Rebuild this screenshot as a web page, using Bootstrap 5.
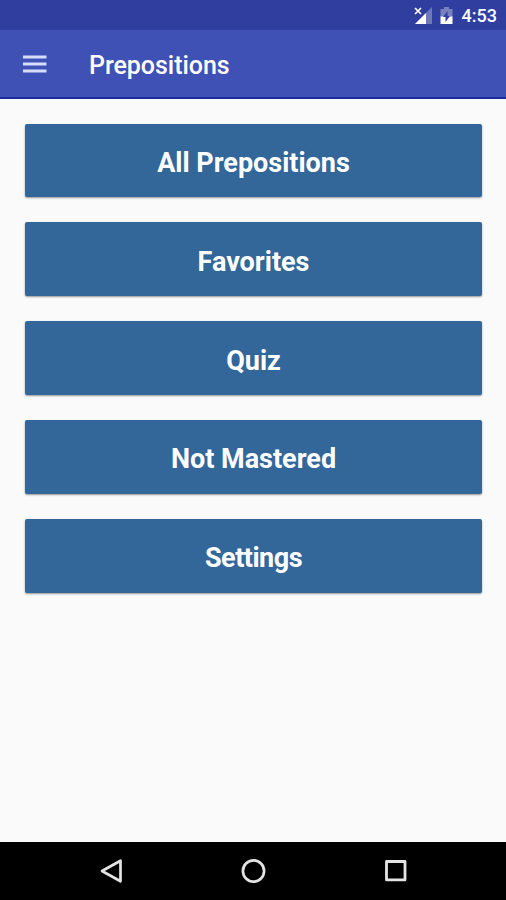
<!DOCTYPE html>
<html lang="en">
<head>
<meta charset="utf-8">
<meta name="viewport" content="width=device-width, initial-scale=1">
<title>Prepositions</title>
<link href="https://cdn.jsdelivr.net/npm/bootstrap@5.3.0/dist/css/bootstrap.min.css" rel="stylesheet">
<style>
body { font-family: Roboto, "Liberation Sans", sans-serif; background: #fafafa; }
.status-bar { height: 30px; background: #303f9f; padding-right: 9px; }
.clock { font-size: 18px; font-weight: 500; line-height: 30px; padding-top: 2px; margin-left: 9px; }
.app-bar { height: 69px; background: #3f51b5; border-bottom: 2px solid #1c2b9c; padding: 1px 22px 0; }
.app-title { font-size: 25px; font-weight: 500; line-height: 30px; margin-left: 42px; padding-top: 3px; letter-spacing: -.04px; }
.menu-list { padding: 24.700px 24px 0 25px; gap: 25.100px; }
.menu-btn, .menu-btn:hover { height: 73.700px; background: #336699; color: #fff; border: 0; border-radius: 2px; font-size: 27px; font-weight: 700; line-height: 32px; padding: 5px 0 0; box-shadow: 0 1px 2px rgba(0,0,0,.4); }
.menu-btn.tight { letter-spacing: -.5px; padding-top: 4px; }
.nav-keys { height: 58px; background: #000; padding: 0 99px; }
</style>
</head>
<body>
<div class="d-flex flex-column vh-100 overflow-hidden">
  <div class="status-bar d-flex align-items-center justify-content-end text-white flex-shrink-0">
    <svg width="19" height="18" viewBox="0 0 19 18" aria-hidden="true"><path d="M19 1v17H2z" fill="#fff" opacity=".3"/><path d="M13 7v11H2z" fill="#fff"/><path d="M2 2l6 6m0-6l-6 6" stroke="#fff" stroke-width="1.700"/></svg>
    <svg class="ms-2" width="13" height="18" viewBox="0 0 13 18" aria-hidden="true"><path d="M4 1h5v2h3.500v8h-12V3H4z" fill="#fff" opacity=".35"/><path d="M.5 10.500h12V18H.5z" fill="#fff"/><path d="M7.500 5v5H10l-4.500 6v-5H3z" fill="#303f9f"/></svg>
    <span class="clock">4:53</span>
  </div>
  <nav class="app-bar d-flex align-items-center text-white flex-shrink-0">
    <svg width="25" height="18" viewBox="0 0 25 18" role="img" aria-label="Menu"><path d="M1 2h23.500M1 9h23.500M1 16h23.500" stroke="#d5defa" stroke-width="3.200"/></svg>
    <span class="app-title">Prepositions</span>
  </nav>
  <main class="menu-list d-flex flex-column flex-grow-1">
    <button class="btn menu-btn w-100">All Prepositions</button>
    <button class="btn menu-btn w-100">Favorites</button>
    <button class="btn menu-btn w-100">Quiz</button>
    <button class="btn menu-btn w-100">Not Mastered</button>
    <button class="btn menu-btn tight w-100">Settings</button>
  </main>
  <footer class="nav-keys d-flex align-items-center justify-content-between flex-shrink-0">
    <svg width="26" height="26" viewBox="0 0 26 26" fill="none" stroke="#e4e4e4" stroke-width="2.700" stroke-linejoin="round" aria-hidden="true"><path d="M21.500 2.700v20.600L3 13z"/></svg>
    <svg width="26" height="26" viewBox="0 0 26 26" fill="none" stroke="#e4e4e4" stroke-width="2.700" aria-hidden="true"><circle cx="13.500" cy="13" r="10.600"/></svg>
    <svg width="26" height="26" viewBox="0 0 26 26" fill="none" stroke="#e4e4e4" stroke-width="2.800" stroke-linejoin="round" aria-hidden="true"><path d="M5.500 3.500h18.500v18.400h-18.500z"/></svg>
  </footer>
</div>
<script src="https://cdn.jsdelivr.net/npm/bootstrap@5.3.0/dist/js/bootstrap.bundle.min.js"></script>
</body>
</html>
